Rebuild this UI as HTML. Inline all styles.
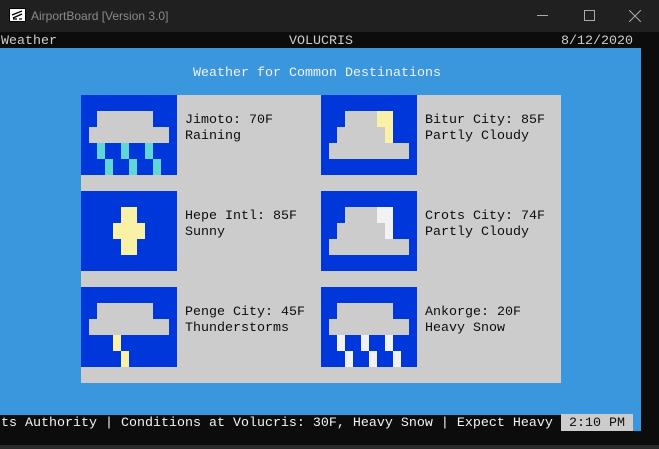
<!DOCTYPE html>
<html><head><meta charset="utf-8"><style>
*{margin:0;padding:0;box-sizing:border-box}
body{width:659px;height:449px;background:#0c0c0c;position:relative;overflow:hidden;font-family:"Liberation Mono",monospace;font-size:13.33px;line-height:16px}
.a{position:absolute}
.t{position:absolute;white-space:pre;color:#ccc;padding-top:2px}
.tile{position:absolute;width:96px;height:80px;background:#0037da}
.tile div{position:absolute}
.g{background:#cccccc}.y{background:#f9f1a5}.c{background:#61d6d6}.w{background:#f2f2f2}
.k{color:#0c0c0c}
</style></head><body>
<div class="a" style="left:0;top:0;width:659px;height:32px;background:#202020"></div>
<div class="a" style="left:9px;top:8px;width:17px;height:14px;background:#fff;border:1px solid #000"></div>
<svg class="a" style="left:10px;top:9px" width="15" height="12"><path d="M2 6 L12 2 M3 9 L12 5 M3 10 H7 M9 10 H12" stroke="#000" stroke-width="1.3" fill="none"/></svg>
<div class="a" style="left:31px;top:8px;white-space:pre;font-family:'Liberation Sans',sans-serif;font-size:12px;line-height:16px;color:#8a8a8a">AirportBoard [Version 3.0]</div>
<div class="a" style="left:537px;top:15px;width:11px;height:1px;background:#aaa"></div>
<div class="a" style="left:584px;top:10px;width:11px;height:11px;border:1px solid #aaa"></div>
<svg class="a" style="left:629px;top:10px" width="12" height="12"><path d="M0 0L12 12M12 0L0 12" stroke="#aaa" stroke-width="1"/></svg>
<div class="t" style="left:1px;top:32px">Weather</div>
<div class="t" style="left:289px;top:32px">VOLUCRIS</div>
<div class="t" style="left:561px;top:32px">8/12/2020</div>
<div class="a" style="left:0;top:48px;width:641px;height:367px;background:#3a96dd"></div>
<div class="t" style="left:193px;top:64px;color:#f2f2f2">Weather for Common Destinations</div>
<div class="a" style="left:81px;top:95px;width:480px;height:288px;background:#cccccc"></div>

<div class="tile" style="left:81px;top:95px">
<div class="g" style="left:16px;top:16px;width:56px;height:16px"></div>
<div class="g" style="left:8px;top:32px;width:80px;height:16px"></div>
<div class="c" style="left:16px;top:48px;width:8px;height:16px"></div>
<div class="c" style="left:40px;top:48px;width:8px;height:16px"></div>
<div class="c" style="left:64px;top:48px;width:8px;height:16px"></div>
<div class="c" style="left:24px;top:64px;width:8px;height:16px"></div>
<div class="c" style="left:48px;top:64px;width:8px;height:16px"></div>
<div class="c" style="left:72px;top:64px;width:8px;height:16px"></div>
</div>
<div class="t k" style="left:185px;top:111px">Jimoto: 70F
Raining</div>

<div class="tile" style="left:81px;top:191px">
<div class="y" style="left:40px;top:16px;width:16px;height:48px"></div>
<div class="y" style="left:32px;top:32px;width:32px;height:16px"></div>
</div>
<div class="t k" style="left:185px;top:207px">Hepe Intl: 85F
Sunny</div>

<div class="tile" style="left:81px;top:287px">
<div class="g" style="left:16px;top:16px;width:56px;height:16px"></div>
<div class="g" style="left:8px;top:32px;width:80px;height:16px"></div>
<div class="y" style="left:32px;top:48px;width:8px;height:16px"></div>
<div class="y" style="left:40px;top:64px;width:8px;height:16px"></div>
</div>
<div class="t k" style="left:185px;top:303px">Penge City: 45F
Thunderstorms</div>

<div class="tile" style="left:321px;top:95px">
<div class="g" style="left:24px;top:16px;width:32px;height:16px"></div>
<div class="y" style="left:56px;top:16px;width:16px;height:16px"></div>
<div class="g" style="left:16px;top:32px;width:48px;height:16px"></div>
<div class="y" style="left:64px;top:32px;width:8px;height:16px"></div>
<div class="g" style="left:8px;top:48px;width:80px;height:16px"></div>
</div>
<div class="t k" style="left:425px;top:111px">Bitur City: 85F
Partly Cloudy</div>

<div class="tile" style="left:321px;top:191px">
<div class="g" style="left:24px;top:16px;width:32px;height:16px"></div>
<div class="w" style="left:56px;top:16px;width:16px;height:16px"></div>
<div class="g" style="left:16px;top:32px;width:48px;height:16px"></div>
<div class="w" style="left:64px;top:32px;width:8px;height:16px"></div>
<div class="g" style="left:8px;top:48px;width:80px;height:16px"></div>
</div>
<div class="t k" style="left:425px;top:207px">Crots City: 74F
Partly Cloudy</div>

<div class="tile" style="left:321px;top:287px">
<div class="g" style="left:16px;top:16px;width:56px;height:16px"></div>
<div class="g" style="left:8px;top:32px;width:80px;height:16px"></div>
<div class="w" style="left:16px;top:48px;width:8px;height:16px"></div>
<div class="w" style="left:40px;top:48px;width:8px;height:16px"></div>
<div class="w" style="left:64px;top:48px;width:8px;height:16px"></div>
<div class="w" style="left:24px;top:64px;width:8px;height:16px"></div>
<div class="w" style="left:48px;top:64px;width:8px;height:16px"></div>
<div class="w" style="left:72px;top:64px;width:8px;height:16px"></div>
</div>
<div class="t k" style="left:425px;top:303px">Ankorge: 20F
Heavy Snow</div>

<div class="a" style="left:0;top:415px;width:641px;height:16px;background:#0c0c0c"></div>
<div class="a" style="left:633px;top:415px;width:8px;height:16px;background:#3a96dd"></div>
<div class="t" style="left:1px;top:414px;height:17px;color:#f2f2f2">ts Authority | Conditions at Volucris: 30F, Heavy Snow | Expect Heavy </div>
<div class="t k" style="left:561px;top:414px;width:72px;height:17px;background:#cccccc"> 2:10 PM </div>
<div class="a" style="left:0;top:445px;width:659px;height:4px;background:#2a2a2a"></div>
</body></html>
